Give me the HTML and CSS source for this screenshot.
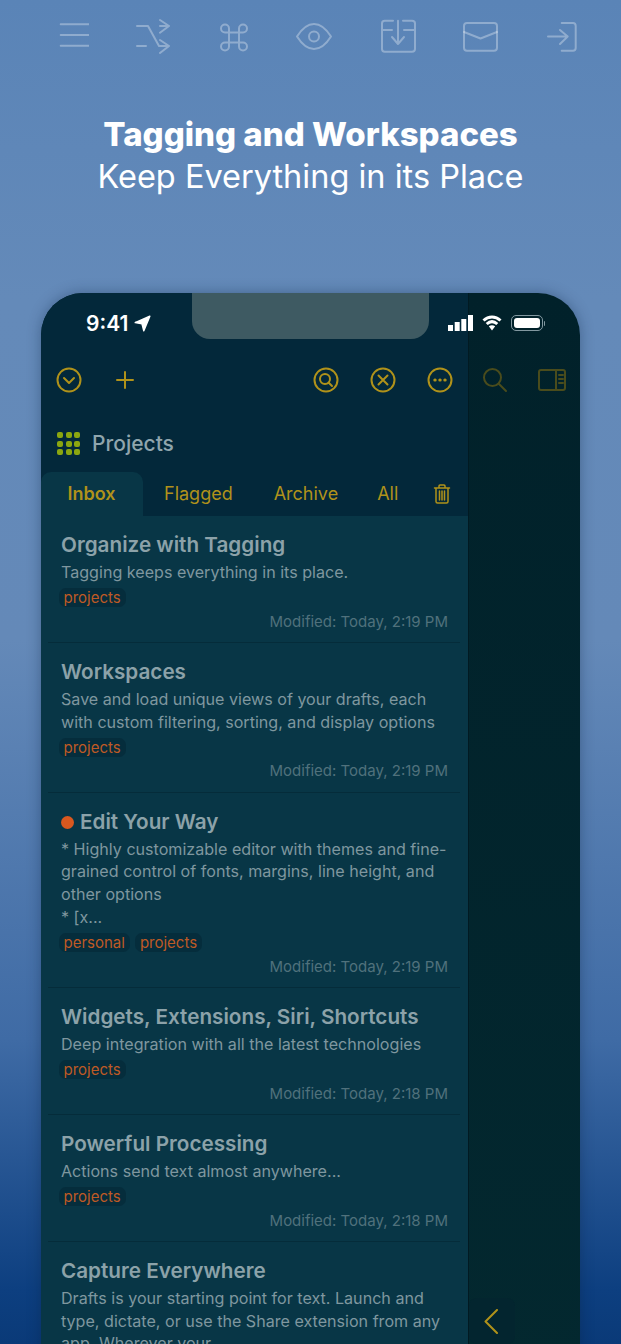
FILE: index.html
```html
<!DOCTYPE html>
<html lang="en">
  <head>
    <meta charset="UTF-8" />
    <meta name="viewport" content="width=device-width, initial-scale=1.0" />
    <title>Tagging and Workspaces</title>
    <link rel="stylesheet" href="styles.css">
  </head>
  <body>
    <div class="icon-strip">
      <svg width="30" height="36" viewBox="0 0 30 36"><path d="M1.700 6.300H29.700M1.700 17H29.700M1.700 27.700H29.700" /></svg>
      <svg width="36" height="36" viewBox="0 0 36 36"><path d="M1 8H12L23 28H33M1 28H10M24 8H33M24 2L33 8L24 14.700M24 22L33 28L24 35" /></svg>
      <svg width="30" height="36" viewBox="0 0 30 36"><path d="M10 10.500A4 4 0 1 0 6 14.500H24A4 4 0 1 0 20 10.500V28.500A4 4 0 1 0 24 24.500H6A4 4 0 1 0 10 28.500V10.500" /></svg>
      <svg width="37" height="36" viewBox="0 0 37 36"><path d="M1 18.500C7 9 12 6 18 6S29 9 35 18.500C29 28 24 31 18 31S7 28 1 18.500Z" /><circle cx="18" cy="18.500" r="5" /></svg>
      <svg width="36" height="36" viewBox="0 0 36 36"><path d="M13 2.700H4.700Q2 2.700 2 5.400V31Q2 33.700 4.700 33.700H32Q35 33.700 35 31V5.400Q35 2.700 32 2.700H23M2 12H12M24 12H35M18 2.700V26M12 19L18 26L24 19" /></svg>
      <svg width="37" height="36" viewBox="0 0 37 36"><rect x="1" y="5" width="33" height="27.700" rx="3" /><path d="M1 14L17.500 20.500L34 14" /></svg>
      <svg width="31" height="36" viewBox="0 0 31 36"><path d="M14.700 5H26Q28.700 5 28.700 8V30Q28.700 32.700 26 32.700H14.700M1 18.500H20.700M13 12L20.700 18.500L13 26" /></svg>
    </div>

    <div class="headline">
      <h1>Tagging and Workspaces</h1>
      <p>Keep Everything in its Place</p>
    </div>

    <div class="phone">
      <div class="notch"></div>
      <div class="status">
        <div class="clock">
          9:41
          <svg width="17" height="17" viewBox="0 0 17 17"><path class="arrow" d="M15.800 1.200L1.200 7.600L8 8.800L9.800 15.800Z" /></svg>
        </div>
        <div class="status-icons">
          <svg width="25" height="16" viewBox="0 0 25 16"><path class="solid" d="M0 10H5V16H0ZM6.700 7H11.700V16H6.700ZM13.300 4H18.300V16H13.300ZM20 0H25V16H20Z" /></svg>
          <svg width="20" height="16" viewBox="0 0 20 16"><path class="wifi" d="M1.500 5.500C6.500 .8 13.500 .8 18.500 5.500M4.700 9C8 6 12 6 15.300 9" /><path class="solid" d="M6.800 11.300C8.800 9.800 11.200 9.800 13.200 11.300L10 15.500Z" /></svg>
          <div class="battery">
            <div class="battery-body"><span></span></div>
            <div class="battery-nub"></div>
          </div>
        </div>
      </div>

      <div class="main">
        <div class="toolbar">
          <svg class="gold" width="26" height="26" viewBox="0 0 26 26"><circle cx="13" cy="13" r="11.500" /><path d="M8 11L13 16L18 11" /></svg>
          <svg class="gold plus" width="18" height="18" viewBox="0 0 18 18"><path d="M9 1V17M1 9H17" /></svg>
          <div class="toolbar-right">
            <svg class="gold" width="26" height="26" viewBox="0 0 26 26"><circle cx="13" cy="13" r="11.500" /><circle cx="12" cy="12" r="5" /><path d="M15.500 15.500L19 19" /></svg>
            <svg class="gold" width="26" height="26" viewBox="0 0 26 26"><circle cx="13" cy="13" r="11.500" /><path d="M8.500 8.500L17.500 17.500M17.500 8.500L8.500 17.500" /></svg>
            <svg class="gold" width="26" height="26" viewBox="0 0 26 26"><circle cx="13" cy="13" r="11.500" /><path class="dots" d="M7.800 13H8.200M12.800 13H13.200M17.800 13H18.200" /></svg>
          </div>
        </div>

        <div class="workspace">
          <div class="dots-grid">
            <i></i><i></i><i></i><i></i><i></i><i></i><i></i><i></i><i></i>
          </div>
          <span>Projects</span>
        </div>

        <div class="tabs">
          <div class="tab active">Inbox</div>
          <div class="tab flagged">Flagged</div>
          <div class="tab archive">Archive</div>
          <div class="tab all">All</div>
          <svg class="gold trash" width="18" height="20" viewBox="0 0 18 20"><path d="M1.500 4H16.500M6 4V2Q6 1 7 1H11Q12 1 12 2V4M3 4V17.500Q3 19 4.500 19H13.500Q15 19 15 17.500V4M6.500 7V16M9 7V16M11.500 7V16" /></svg>
        </div>

        <div class="list">
          <div class="item">
            <h3>Organize with Tagging</h3>
            <p>Tagging keeps everything in its place.</p>
            <div class="tags"><span class="tag">projects</span></div>
            <div class="modified">Modified: Today, 2:19 PM</div>
          </div>
          <div class="item">
            <h3>Workspaces</h3>
            <p>Save and load unique views of your drafts, each<br />with custom filtering, sorting, and display options</p>
            <div class="tags"><span class="tag">projects</span></div>
            <div class="modified">Modified: Today, 2:19 PM</div>
          </div>
          <div class="item">
            <h3><span class="flag"></span>Edit Your Way</h3>
            <p>* Highly customizable editor with themes and fine-<br />grained control of fonts, margins, line height, and<br />other options<br />* [x...</p>
            <div class="tags"><span class="tag">personal</span><span class="tag">projects</span></div>
            <div class="modified">Modified: Today, 2:19 PM</div>
          </div>
          <div class="item">
            <h3>Widgets, Extensions, Siri, Shortcuts</h3>
            <p>Deep integration with all the latest technologies</p>
            <div class="tags"><span class="tag">projects</span></div>
            <div class="modified">Modified: Today, 2:18 PM</div>
          </div>
          <div class="item">
            <h3>Powerful Processing</h3>
            <p>Actions send text almost anywhere...</p>
            <div class="tags"><span class="tag">projects</span></div>
            <div class="modified">Modified: Today, 2:18 PM</div>
          </div>
          <div class="item">
            <h3>Capture Everywhere</h3>
            <p>Drafts is your starting point for text. Launch and<br />type, dictate, or use the Share extension from any<br />app. Wherever your...</p>
          </div>
        </div>
      </div>

      <div class="side">
        <div class="side-tools">
          <svg class="dim" width="26" height="26" viewBox="0 0 26 26"><circle cx="10.500" cy="10.500" r="8.500" /><path d="M17 17L24 24" /></svg>
          <svg class="dim" width="28" height="22" viewBox="0 0 28 22"><rect x="1" y="1" width="26" height="20" rx="2" /><path d="M18 1V21M21 6H25M21 10H25M21 14H25" /></svg>
        </div>
        <div class="collapse">
          <svg class="gold" width="14" height="25" viewBox="0 0 14 25"><path d="M13 1L1.500 12.500L13 24" /></svg>
        </div>
      </div>
    </div>
  </body>
</html>
```

FILE: styles.css
```css
html,
body {
  margin: 0;
  height: 100%;
}
body {
  width: 621px;
  height: 1344px;
  overflow: hidden;
  font-family: Inter, "Noto Sans", sans-serif;
  background: linear-gradient(
    #5a84b7 0,
    #648ab9 300px,
    #6489b8 640px,
    #3f6ba5 1040px,
    #0d3f80 1290px,
    #0a3a78 100%
  );
}
svg {
  display: block;
  flex: none;
  fill: none;
  stroke-linecap: round;
  stroke-linejoin: round;
}
.icon-strip {
  padding: 18px 0 0 59px;
  display: flex;
  gap: 47px;
}
.icon-strip svg {
  stroke: rgba(255, 255, 255, 0.32);
  stroke-width: 2;
}
.headline {
  margin-top: 60px;
  color: #fff;
  text-align: center;
}
.headline h1 {
  margin: 0;
  font-size: 33px;
  line-height: 40px;
  font-weight: 800;
}
.headline p {
  margin: 3px 0 0;
  font-size: 32.500px;
  line-height: 40px;
  font-weight: 400;
}

.phone {
  position: relative;
  width: 539px;
  height: 1100px;
  margin: 96px 0 0 41px;
  display: flex;
  border-radius: 42px 42px 0 0;
  overflow: hidden;
  background: linear-gradient(#01212a, #03282f);
  box-shadow: 0 0 14px rgba(10, 30, 60, 0.35);
}
.notch {
  position: absolute;
  top: 0;
  left: 151px;
  width: 237px;
  height: 46px;
  border-radius: 0 0 18px 18px;
  background: #3e5a62;
}
.status {
  position: absolute;
  top: 0;
  left: 0;
  right: 0;
  height: 60px;
  display: flex;
  justify-content: space-between;
  align-items: center;
  padding: 0 35px 0 45px;
  color: #fff;
}
.clock {
  display: flex;
  align-items: center;
  gap: 6px;
  font-size: 21px;
  font-weight: 600;
}
.arrow {
  fill: #fff;
  stroke: #fff;
  stroke-width: 1.500;
}
.status-icons {
  display: flex;
  align-items: center;
  gap: 9px;
}
.solid {
  fill: #fff;
}
.wifi {
  stroke: #fff;
  stroke-width: 3;
  stroke-linecap: butt;
}
.battery {
  display: flex;
  align-items: center;
  gap: 1px;
}
.battery-body {
  box-sizing: border-box;
  width: 32px;
  height: 16px;
  padding: 2px;
  border: 1px solid #8298a0;
  border-radius: 5px;
}
.battery-body span {
  display: block;
  height: 100%;
  border-radius: 3px;
  background: #fff;
}
.battery-nub {
  width: 1.500px;
  height: 5px;
  border-radius: 0 2px 2px 0;
  background: #8298a0;
}

.main {
  width: 428px;
  background: #03283a;
  border-right: 1px solid #011a22;
  box-sizing: border-box;
  display: flex;
  flex-direction: column;
}
.gold {
  stroke: #b0921a;
  stroke-width: 2;
}
.toolbar {
  display: flex;
  align-items: center;
  margin-top: 74px;
  padding: 0 15px;
  height: 26px;
}
.plus {
  margin-left: 34px;
}
.toolbar-right {
  margin-left: auto;
  display: flex;
  gap: 31px;
}
.dots {
  stroke-width: 3;
}
.workspace {
  display: flex;
  align-items: center;
  gap: 12px;
  margin-top: 38.500px;
  padding-left: 16px;
  height: 24px;
  color: #8fa5ad;
  font-size: 21px;
  font-weight: 500;
}
.dots-grid {
  display: grid;
  grid-template-columns: repeat(3, 6px);
  grid-auto-rows: 6px;
  gap: 2.500px;
}
.dots-grid i {
  border-radius: 2px;
  background: #8ba610;
}
.tabs {
  display: flex;
  align-items: center;
  height: 44px;
  margin-top: 16.500px;
  color: #b0921a;
  font-size: 18px;
}
.tab {
  line-height: 44px;
}
.active {
  width: 102px;
  padding-right: 1px;
  box-sizing: border-box;
  text-align: center;
  font-weight: 600;
  background: #083646;
  border-radius: 10px 10px 0 0;
}
.flagged {
  margin-left: 21px;
}
.archive {
  margin-left: 41px;
}
.all {
  margin-left: 39px;
}
.trash {
  margin-left: 35px;
  stroke-width: 1.500;
}
.list {
  flex: 1;
  background: #083646;
}
.item {
  margin: 0 8px 0 7px;
  padding: 15px 12px 10.300px 13px;
  border-bottom: 1px solid #052c3a;
}
.item:last-child {
  border-bottom: none;
}
.item h3 {
  margin: 0;
  font-size: 20.700px;
  line-height: 28px;
  font-weight: 600;
  color: #8ca2a9;
}
.flag {
  display: inline-block;
  width: 13px;
  height: 13px;
  margin-right: 6px;
  border-radius: 50%;
  background: #d9581f;
}
.item p {
  margin: 2px 0 0;
  font-size: 16.100px;
  line-height: 22.700px;
  color: #7f979f;
}
.tags {
  display: flex;
  gap: 5px;
  margin: 4.500px 0 0 -2.500px;
}
.tag {
  padding: 0 5px;
  border-radius: 7px;
  background: #052d3c;
  color: #bf5a25;
  font-size: 15px;
  line-height: 19px;
}
.modified {
  margin-top: 4.500px;
  text-align: right;
  font-size: 15px;
  line-height: 20px;
  color: #50717c;
}
.side {
  flex: 1;
  position: relative;
}
.side-tools {
  display: flex;
  align-items: center;
  justify-content: space-between;
  margin-top: 74px;
  padding: 0 14px 0 13px;
}
.dim {
  stroke: #4a4c1c;
  stroke-width: 2;
}
.collapse {
  position: absolute;
  top: 1005px;
  left: 0;
  box-sizing: border-box;
  width: 46px;
  height: 46px;
  padding-right: 3px;
  display: flex;
  align-items: center;
  justify-content: center;
  border-radius: 8px;
  background: #03252f;
}
```
